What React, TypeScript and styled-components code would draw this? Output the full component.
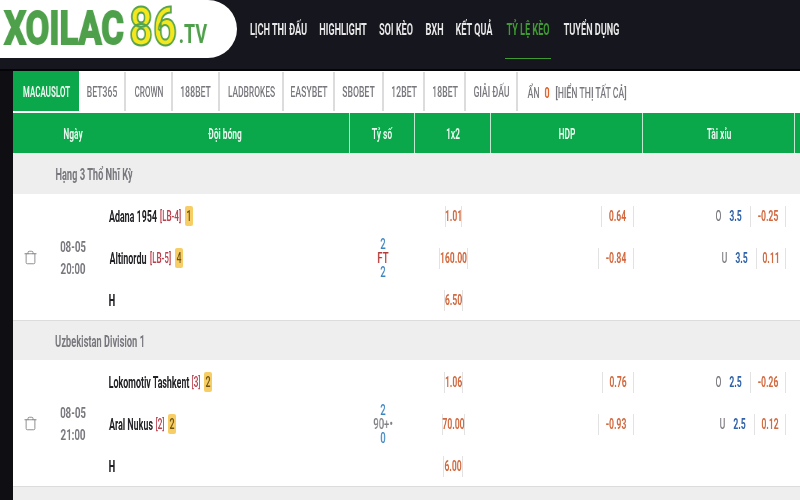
import React from 'react'
import styled, { createGlobalStyle } from 'styled-components'
import { Trash } from 'lucide-react'

const GlobalStyle = createGlobalStyle`
  html, body {
    margin: 0;
    height: 500px;
    overflow: hidden;
    background: #0f0f13;
    font-family: Roboto, "Liberation Sans", sans-serif;
  }
`

const COLUMNS = '32px 55px 250px 65px 76px 152px 152px 1fr'

// the source font is very condensed, so text is squeezed inside a box of the real width
const Cond = styled.span<{ $w: number; $s?: number }>`
  display: inline-flex;
  justify-content: center;
  flex: none;
  width: ${props => props.$w}px;
  white-space: nowrap;
  transform: scaleX(${props => props.$s ?? 0.58});
  will-change: transform;
`

const Header = styled.header`
  display: flex;
  height: 69px;
  background: #16161e;
  border-bottom: 2px solid #050507;
`

const Logo = styled.div`
  display: flex;
  align-items: center;
  width: 237px;
  height: 58px;
  padding: 0 0 3px 1px;
  box-sizing: border-box;
  background: #fff;
  border-radius: 0 30px 30px 0;
  font-weight: 700;
  line-height: 1;
`

const LogoName = styled(Cond)`
  font-size: 46px;
  color: #4fa04b;
  -webkit-text-stroke: 2px #4fa04b;
`

const LogoNumber = styled(Cond)`
  font-size: 53px;
  margin-left: 1px;
  color: #f6e71d;
  -webkit-text-stroke: 2px #55a34c;
`

const LogoDomain = styled(Cond)`
  font-size: 25px;
  color: #4fa04b;
  align-self: flex-end;
  margin-bottom: 8px;
`

const Nav = styled.nav`
  display: flex;
  gap: 13px;
  padding-left: 13px;
`

const NavItem = styled.a<{ $active?: boolean }>`
  display: flex;
  align-items: center;
  height: 58px;
  margin-bottom: 2px;
  font-size: 16px;
  font-weight: 700;
  color: ${props => (props.$active ? '#3f9b31' : '#e6e6e6')};
  border-bottom: 1px solid ${props => (props.$active ? '#3f9b31' : 'transparent')};
`

const Board = styled.main`
  margin-left: 13px;
  background: #fff;
`

const Tabs = styled.div`
  display: flex;
  height: 40px;
  border-bottom: 2px solid #fff;
`

const Tab = styled.a<{ $w: number; $active?: boolean }>`
  display: flex;
  align-items: center;
  justify-content: center;
  flex: none;
  box-sizing: border-box;
  width: ${props => props.$w}px;
  margin-top: ${props => (props.$active ? 0 : 1)}px;
  padding-top: ${props => (props.$active ? 2 : 1)}px;
  font-size: 15px;
  color: ${props => (props.$active ? '#e9f8ee' : '#77777d')};
  font-weight: ${props => (props.$active ? 700 : 500)};
  background: ${props => (props.$active ? '#0aa84a' : 'transparent')};
  border-right: ${props => (props.$active ? 0 : 2)}px solid #dcdcdc;
`

const HiddenCount = styled.div`
  display: flex;
  align-items: center;
  gap: 5px;
  padding: 3px 0 0 10px;
  font-size: 15px;
  font-weight: 500;
  color: #77777d;
`

const Zero = styled(Cond)`
  color: #dd5f27;
  font-weight: 700;
`

const HeadRow = styled.div`
  display: grid;
  grid-template-columns: ${COLUMNS};
  height: 40px;
  background: #0aa84a;
`

const HeadCell = styled.div<{ $line?: boolean }>`
  display: flex;
  align-items: center;
  justify-content: center;
  box-sizing: border-box;
  padding-top: 2px;
  border-right: ${props => (props.$line ? 1 : 0)}px solid #bfe9cf;
  font-size: 14.5px;
  font-weight: 700;
  color: #e9f8ee;
`

const GroupRow = styled.div<{ $h: number }>`
  display: flex;
  align-items: center;
  box-sizing: border-box;
  height: ${props => props.$h}px;
  padding: 2px 0 0 42px;
  background: #eeeeee;
  font-size: 16px;
  font-weight: 700;
  color: #77777d;
`

const MatchRow = styled.div`
  display: grid;
  grid-template-columns: ${COLUMNS};
  grid-template-rows: repeat(3, 42px);
  border-bottom: 1px solid #dcdcdc;
`

const Spanned = styled.div`
  grid-row: 1 / span 3;
  display: flex;
  flex-direction: column;
  align-items: center;
  justify-content: center;
`

const TrashCell = styled(Spanned)`
  grid-column: 1;
  color: #77777d;
  padding-left: 2px;
`

const DateCell = styled(Spanned)`
  grid-column: 2;
  padding-top: 2px;
  font-size: 15.5px;
  line-height: 22px;
  color: #77777d;
  font-weight: 700;
`

const ScoreCell = styled(Spanned)`
  grid-column: 4;
  padding-top: 1px;
  font-size: 14px;
  line-height: 14px;
`

const ScoreLine = styled(Cond)<{ $tone: string }>`
  font-weight: 500;
  color: ${props => props.$tone};
`

const Team = styled.div<{ $row: number }>`
  grid-column: 3;
  grid-row: ${props => props.$row};
  display: flex;
  align-items: center;
  gap: 2px;
  padding: 2px 0 0 9px;
  font-size: 16px;
  font-weight: 700;
  color: #222226;
`

const Rank = styled(Cond)`
  font-size: 14px;
  font-weight: 500;
  color: #b9404c;
`

const Goals = styled.span`
  display: flex;
  align-items: center;
  justify-content: center;
  width: 8px;
  height: 20px;
  margin-left: 1px;
  border-radius: 2px;
  background: #f7cd66;
  font-size: 15px;
  font-weight: 500;
  color: #6d5214;
`

const OddsCell = styled.div<{ $col: number; $row: number }>`
  grid-column: ${props => props.$col};
  grid-row: ${props => props.$row};
  display: flex;
  align-items: center;
  justify-content: ${props => (props.$col === 5 ? 'center' : 'flex-end')};
  padding: 2px ${props => (props.$col === 5 ? 0 : 9)}px 0 0;
  font-size: 15px;
`

const Odd = styled.span<{ $w: number }>`
  display: flex;
  align-items: center;
  justify-content: center;
  box-sizing: border-box;
  width: ${props => props.$w}px;
  height: 21px;
  border-left: 1px solid #e2e2e2;
  border-right: 1px solid #e2e2e2;
  font-weight: 700;
  color: #d2693f;
`

const Side = styled(Cond)`
  color: #77777d;
  font-weight: 500;
  margin-right: 8px;
`

const LineValue = styled(Cond)`
  font-weight: 700;
  color: #2f62a8;
  margin-right: 8px;
`

type OddValue = { text: string; w: number }
type TotalValue = OddValue & { side: string; line: string }
type TeamValue = { name: string; nameW: number; rank: string; rankW: number; goals: string }

type Match = {
  day: string
  time: string
  teams: TeamValue[]
  score: string[]
  oneXTwo: OddValue[]
  hdp: OddValue[]
  totals: TotalValue[]
}

const NAV = [
  { label: 'LỊCH THI ĐẤU', w: 57 },
  { label: 'HIGHLIGHT', w: 46 },
  { label: 'SOI KÈO', w: 34 },
  { label: 'BXH', w: 17 },
  { label: 'KẾT QUẢ', w: 36 },
  { label: 'TỶ LỆ KÈO', w: 46, active: true },
  { label: 'TUYỂN DỤNG', w: 55 },
]

const TABS = [
  { label: 'MACAUSLOT', w: 66, text: 49, s: 0.53, active: true },
  { label: 'BET365', w: 47, text: 30 },
  { label: 'CROWN', w: 47, text: 30, s: 0.54 },
  { label: '188BET', w: 47, text: 29 },
  { label: 'LADBROKES', w: 64, text: 47, s: 0.56 },
  { label: 'EASYBET', w: 51, text: 34 },
  { label: 'SBOBET', w: 49, text: 31 },
  { label: '12BET', w: 41, text: 24 },
  { label: '18BET', w: 41, text: 24 },
  { label: 'GIẢI ĐẤU', w: 52, text: 35 },
]

const MATCHES: Match[] = [
  {
    day: '08-05',
    time: '20:00',
    teams: [
      { name: 'Adana 1954', nameW: 48, rank: '[LB-4]', rankW: 23, goals: '1' },
      { name: 'Altinordu', nameW: 38, rank: '[LB-5]', rankW: 23, goals: '4' },
    ],
    score: ['2', 'FT', '2'],
    oneXTwo: [
      { text: '1.01', w: 17 },
      { text: '160.00', w: 29 },
      { text: '6.50', w: 19 },
    ],
    hdp: [
      { text: '0.64', w: 33 },
      { text: '-0.84', w: 36 },
    ],
    totals: [
      { side: 'O', line: '3.5', text: '-0.25', w: 36 },
      { side: 'U', line: '3.5', text: '0.11', w: 30 },
    ],
  },
  {
    day: '08-05',
    time: '21:00',
    teams: [
      { name: 'Lokomotiv Tashkent', nameW: 80, rank: '[3]', rankW: 10, goals: '2' },
      { name: 'Aral Nukus', nameW: 44, rank: '[2]', rankW: 10, goals: '2' },
    ],
    score: ['2', '90+•', '0'],
    oneXTwo: [
      { text: '1.06', w: 19 },
      { text: '70.00', w: 23 },
      { text: '6.00', w: 20 },
    ],
    hdp: [
      { text: '0.76', w: 32 },
      { text: '-0.93', w: 36 },
    ],
    totals: [
      { side: 'O', line: '2.5', text: '-0.26', w: 36 },
      { side: 'U', line: '2.5', text: '0.12', w: 32 },
    ],
  },
]

const scoreTone = (line: string, index: number) => {
  if (index !== 1) return '#3a84c0'
  return line === 'FT' ? '#b53a3a' : '#808086'
}

const MatchBlock = ({ match }: { match: Match }) => (
  <MatchRow>
    <TrashCell>
      <Trash size={15} strokeWidth={1.3} />
    </TrashCell>
    <DateCell>
      <Cond $w={26} $s={0.62}>{match.day}</Cond>
      <Cond $w={26} $s={0.62}>{match.time}</Cond>
    </DateCell>
    {match.teams.map((team, index) => (
      <Team key={team.name} $row={index + 1}>
        <Cond $w={team.nameW} $s={0.555}>{team.name}</Cond>
        <Rank $w={team.rankW}>{team.rank}</Rank>
        <Goals>
          <Cond $w={6}>{team.goals}</Cond>
        </Goals>
      </Team>
    ))}
    <Team $row={3}>
      <Cond $w={6}>H</Cond>
    </Team>
    <ScoreCell>
      {match.score.map((line, index) => (
        <ScoreLine key={index} $w={16} $s={0.68} $tone={scoreTone(line, index)}>
          {line}
        </ScoreLine>
      ))}
    </ScoreCell>
    {match.oneXTwo.map((odd, index) => (
      <OddsCell key={odd.text} $col={5} $row={index + 1}>
        <Odd $w={odd.w}>
          <Cond $w={odd.w - 2} $s={0.57}>{odd.text}</Cond>
        </Odd>
      </OddsCell>
    ))}
    {match.hdp.map((odd, index) => (
      <OddsCell key={odd.text} $col={6} $row={index + 1}>
        <Odd $w={odd.w}>
          <Cond $w={odd.w - 2} $s={0.57}>{odd.text}</Cond>
        </Odd>
      </OddsCell>
    ))}
    {match.totals.map((odd, index) => (
      <OddsCell key={odd.text} $col={7} $row={index + 1}>
        <Side $w={5}>{odd.side}</Side>
        <LineValue $w={13} $s={0.57}>{odd.line}</LineValue>
        <Odd $w={odd.w}>
          <Cond $w={odd.w - 2} $s={0.57}>{odd.text}</Cond>
        </Odd>
      </OddsCell>
    ))}
  </MatchRow>
)

export default function App() {
  return (
    <>
      <GlobalStyle />
      <Header>
        <Logo>
          <LogoName $w={126} $s={0.75}>XOILAC</LogoName>
          <LogoNumber $w={50} $s={0.78}>86</LogoNumber>
          <LogoDomain $w={30} $s={0.72}>.TV</LogoDomain>
        </Logo>
        <Nav>
          {NAV.map(item => (
            <NavItem key={item.label} $active={item.active}>
              <Cond $w={item.w} $s={0.57}>{item.label}</Cond>
            </NavItem>
          ))}
        </Nav>
      </Header>
      <Board>
        <Tabs>
          {TABS.map(tab => (
            <Tab key={tab.label} $w={tab.w} $active={tab.active}>
              <Cond $w={tab.text} $s={tab.s}>{tab.label}</Cond>
            </Tab>
          ))}
          <HiddenCount>
            <Cond $w={11}>ẨN</Cond>
            <Zero $w={6}>0</Zero>
            <Cond $w={72}>[HIỂN THỊ TẤT CẢ]</Cond>
          </HiddenCount>
        </Tabs>
        <HeadRow>
          <HeadCell />
          <HeadCell>
            <Cond $w={20}>Ngày</Cond>
          </HeadCell>
          <HeadCell $line>
            <Cond $w={34}>Đội bóng</Cond>
          </HeadCell>
          <HeadCell $line>
            <Cond $w={20}>Tỷ số</Cond>
          </HeadCell>
          <HeadCell $line>
            <Cond $w={14}>1x2</Cond>
          </HeadCell>
          <HeadCell $line>
            <Cond $w={18}>HDP</Cond>
          </HeadCell>
          <HeadCell $line>
            <Cond $w={26}>Tài xỉu</Cond>
          </HeadCell>
          <HeadCell />
        </HeadRow>
        <GroupRow $h={41}>
          <Cond $w={78} $s={0.58}>Hạng 3 Thổ Nhĩ Kỳ</Cond>
        </GroupRow>
        <MatchBlock match={MATCHES[0]} />
        <GroupRow $h={39}>
          <Cond $w={90} $s={0.58}>Uzbekistan Division 1</Cond>
        </GroupRow>
        <MatchBlock match={MATCHES[1]} />
        <GroupRow $h={20} />
      </Board>
    </>
  )
}
